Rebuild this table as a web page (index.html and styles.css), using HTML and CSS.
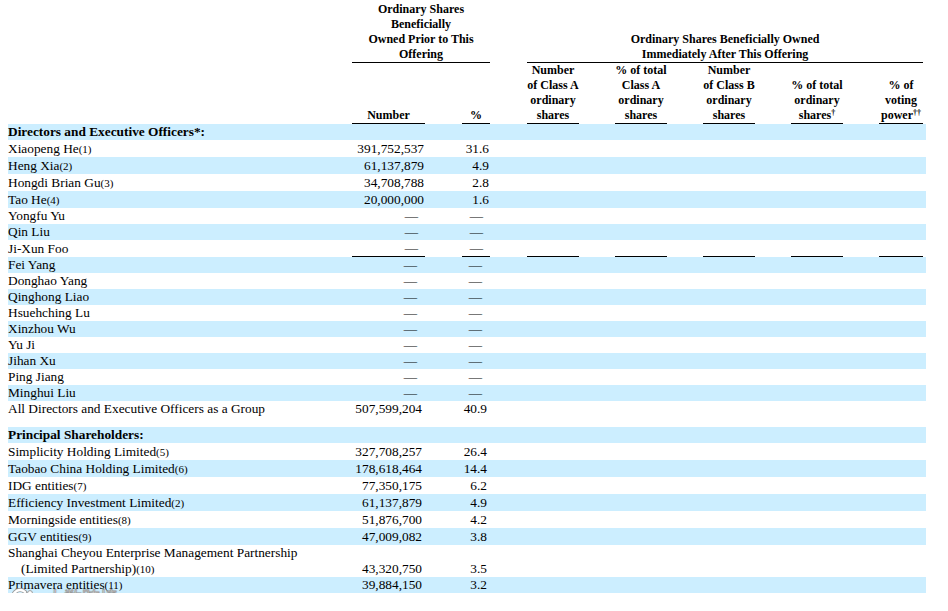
FILE: index.html
```html
<!DOCTYPE html>
<html lang="en">
<head>
<meta charset="utf-8">
<title>Beneficial Ownership</title>
<link rel="stylesheet" href="styles.css">
</head>
<body>
<div class="page">
<table class="own">
  <colgroup>
    <col class="w-name"><col class="w-num"><col class="w-g1"><col class="w-pct"><col class="w-g1">
    <col class="w-c"><col class="w-g"><col class="w-c"><col class="w-g"><col class="w-c"><col class="w-g"><col class="w-c"><col class="w-g"><col class="w-c5"><col class="w-tail">
  </colgroup>
  <thead>
    <tr>
      <th rowspan="2"></th>
      <th colspan="3" class="ul">Ordinary Shares<br>Beneficially<br>Owned Prior to This<br>Offering</th>
      <th></th>
      <th colspan="9" class="ul">Ordinary Shares Beneficially Owned<br>Immediately After This Offering</th>
      <th></th>
    </tr>
    <tr>
      <th class="ul">Number</th>
      <th></th>
      <th class="ul">%</th>
      <th></th>
      <th class="ul">Number<br>of Class A<br>ordinary<br>shares</th>
      <th></th>
      <th class="ul">% of total<br>Class A<br>ordinary<br>shares</th>
      <th></th>
      <th class="ul">Number<br>of Class B<br>ordinary<br>shares</th>
      <th></th>
      <th class="ul">% of total<br>ordinary<br>shares<sup>†</sup></th>
      <th></th>
      <th class="ul">% of<br>voting<br>power<sup>††</sup></th>
      <th></th>
    </tr>
  </thead>
  <tbody class="p1">
    <tr class="b"><td class="sec">Directors and Executive Officers*:</td><td colspan="14"></td></tr>
    <tr class="fn"><td>Xiaopeng He<span class="fr">(1)</span></td><td class="n">391,752,537</td><td></td><td class="n">31.6</td><td colspan="11"></td></tr>
    <tr class="b fn"><td>Heng Xia<span class="fr">(2)</span></td><td class="n">61,137,879</td><td></td><td class="n">4.9</td><td colspan="11"></td></tr>
    <tr class="fn"><td>Hongdi Brian Gu<span class="fr">(3)</span></td><td class="n">34,708,788</td><td></td><td class="n">2.8</td><td colspan="11"></td></tr>
    <tr class="b fn"><td>Tao He<span class="fr">(4)</span></td><td class="n">20,000,000</td><td></td><td class="n">1.6</td><td colspan="11"></td></tr>
    <tr><td>Yongfu Yu</td><td class="d">—</td><td></td><td class="d">—</td><td colspan="11"></td></tr>
    <tr class="b"><td>Qin Liu</td><td class="d">—</td><td></td><td class="d">—</td><td colspan="11"></td></tr>
    <tr class="brk"><td>Ji-Xun Foo</td><td class="d ul">—</td><td></td><td class="d ul">—</td><td></td><td class="ul"></td><td></td><td class="ul"></td><td></td><td class="ul"></td><td></td><td class="ul"></td><td></td><td class="ul"></td><td></td></tr>
  </tbody>
  <tbody class="p2">
    <tr class="b"><td>Fei Yang</td><td class="d">—</td><td></td><td class="d">—</td><td colspan="11"></td></tr>
    <tr><td>Donghao Yang</td><td class="d">—</td><td></td><td class="d">—</td><td colspan="11"></td></tr>
    <tr class="b"><td>Qinghong Liao</td><td class="d">—</td><td></td><td class="d">—</td><td colspan="11"></td></tr>
    <tr><td>Hsuehching Lu</td><td class="d">—</td><td></td><td class="d">—</td><td colspan="11"></td></tr>
    <tr class="b"><td>Xinzhou Wu</td><td class="d">—</td><td></td><td class="d">—</td><td colspan="11"></td></tr>
    <tr><td>Yu Ji</td><td class="d">—</td><td></td><td class="d">—</td><td colspan="11"></td></tr>
    <tr class="b"><td>Jihan Xu</td><td class="d">—</td><td></td><td class="d">—</td><td colspan="11"></td></tr>
    <tr><td>Ping Jiang</td><td class="d">—</td><td></td><td class="d">—</td><td colspan="11"></td></tr>
    <tr class="b"><td>Minghui Liu</td><td class="d">—</td><td></td><td class="d">—</td><td colspan="11"></td></tr>
    <tr><td>All Directors and Executive Officers as a Group</td><td class="n">507,599,204</td><td></td><td class="n">40.9</td><td colspan="11"></td></tr>
    <tr class="sp"><td colspan="15"></td></tr>
    <tr class="b"><td class="sec">Principal Shareholders:</td><td colspan="14"></td></tr>
    <tr class="fn"><td>Simplicity Holding Limited<span class="fr">(5)</span></td><td class="n">327,708,257</td><td></td><td class="n">26.4</td><td colspan="11"></td></tr>
    <tr class="b fn"><td>Taobao China Holding Limited<span class="fr">(6)</span></td><td class="n">178,618,464</td><td></td><td class="n">14.4</td><td colspan="11"></td></tr>
    <tr class="fn"><td>IDG entities<span class="fr">(7)</span></td><td class="n">77,350,175</td><td></td><td class="n">6.2</td><td colspan="11"></td></tr>
    <tr class="b fn"><td>Efficiency Investment Limited<span class="fr">(2)</span></td><td class="n">61,137,879</td><td></td><td class="n">4.9</td><td colspan="11"></td></tr>
    <tr class="fn"><td>Morningside entities<span class="fr">(8)</span></td><td class="n">51,876,700</td><td></td><td class="n">4.2</td><td colspan="11"></td></tr>
    <tr class="b fn"><td>GGV entities<span class="fr">(9)</span></td><td class="n">47,009,082</td><td></td><td class="n">3.8</td><td colspan="11"></td></tr>
    <tr class="two"><td class="hang">Shanghai Cheyou Enterprise Management Partnership<br>(Limited Partnership)<span class="fr">(10)</span></td><td class="n">43,320,750</td><td></td><td class="n">3.5</td><td colspan="11"></td></tr>
    <tr class="b"><td>Primavera entities<span class="fr">(11)</span></td><td class="n">39,884,150</td><td></td><td class="n">3.2</td><td colspan="11"></td></tr>
  </tbody>
</table>
<div class="wm">
  <svg class="wm-logo" width="26" height="18" viewBox="0 0 26 18">
    <path d="M15 4 A7 7 0 1 0 15 14" fill="none" stroke="#9a9a9a" stroke-width="4.2" stroke-linecap="round"/>
    <path d="M15 4 A7 7 0 1 0 15 14" fill="none" stroke="#ffffff" stroke-width="2.4" stroke-linecap="round"/>
    <circle cx="20" cy="5" r="2.4" fill="#fff" stroke="#9a9a9a" stroke-width="1"/>
  </svg>
  <span class="wm-text">大数跨境</span>
</div>
</div>
</body>
</html>
```
FILE: styles.css
```css
body {
  margin: 0;
  background: #fff;
  color: #000;
  font-family: "Liberation Serif", "Times New Roman", serif;
}

.page {
  position: relative;
  padding: 2px 8px 0 8px;
}

.own {
  width: 918px;
  table-layout: fixed;
  border-collapse: separate;
  border-spacing: 0;
  font-size: 13.33px;
}

.w-name { width: 344px; }
.w-num { width: 73px; }
.w-g1 { width: 37px; }
.w-pct { width: 28px; }
.w-c { width: 52px; }
.w-g { width: 36px; }
.w-c5 { width: 44px; }
.w-tail { width: 3px; }

.own th,
.own td {
  padding: 0;
}

.own th {
  font-size: 12px;
  font-weight: bold;
  line-height: 15px;
  text-align: center;
  vertical-align: bottom;
}

.own th sup {
  font-size: 8px;
  line-height: 0;
  vertical-align: 4px;
}

.own td {
  height: 16px;
  line-height: 16px;
  white-space: nowrap;
  text-align: left;
}

.own tr.fn td { height: 17px; }
.own tr.brk td { height: 16px; }

.own .ul {
  border-bottom: 1px solid #000;
}

.own tr.b td {
  background: #cceeff;
}

.own td.sec {
  font-weight: bold;
}

.own td.n {
  text-align: right;
  padding-right: 1px;
}

.own td.d {
  text-align: right;
  padding-right: 7px;
}

.own .p2 td.n { padding-right: 3px; }
.own .p2 td.d { padding-right: 8px; }

.fr {
  font-size: 11px;
  line-height: 1;
}

.own tr.sp td { height: 10px; line-height: 10px; }

.own tr.two td { height: 32px; vertical-align: bottom; }

.own td.hang {
  padding-left: 13px;
  text-indent: -13px;
  white-space: normal;
}

.wm {
  position: absolute;
  left: 10px;
  top: 588px;
  display: flex;
  align-items: center;
  gap: 10px;
}

.wm-text {
  font-family: "Noto Sans CJK SC", sans-serif;
  font-size: 18px;
  line-height: 18px;
  color: #ffffff;
  -webkit-text-stroke: 0.8px #9a9a9a;
  text-shadow: 0 0 2px rgba(0, 0, 0, 0.3);
}
```
